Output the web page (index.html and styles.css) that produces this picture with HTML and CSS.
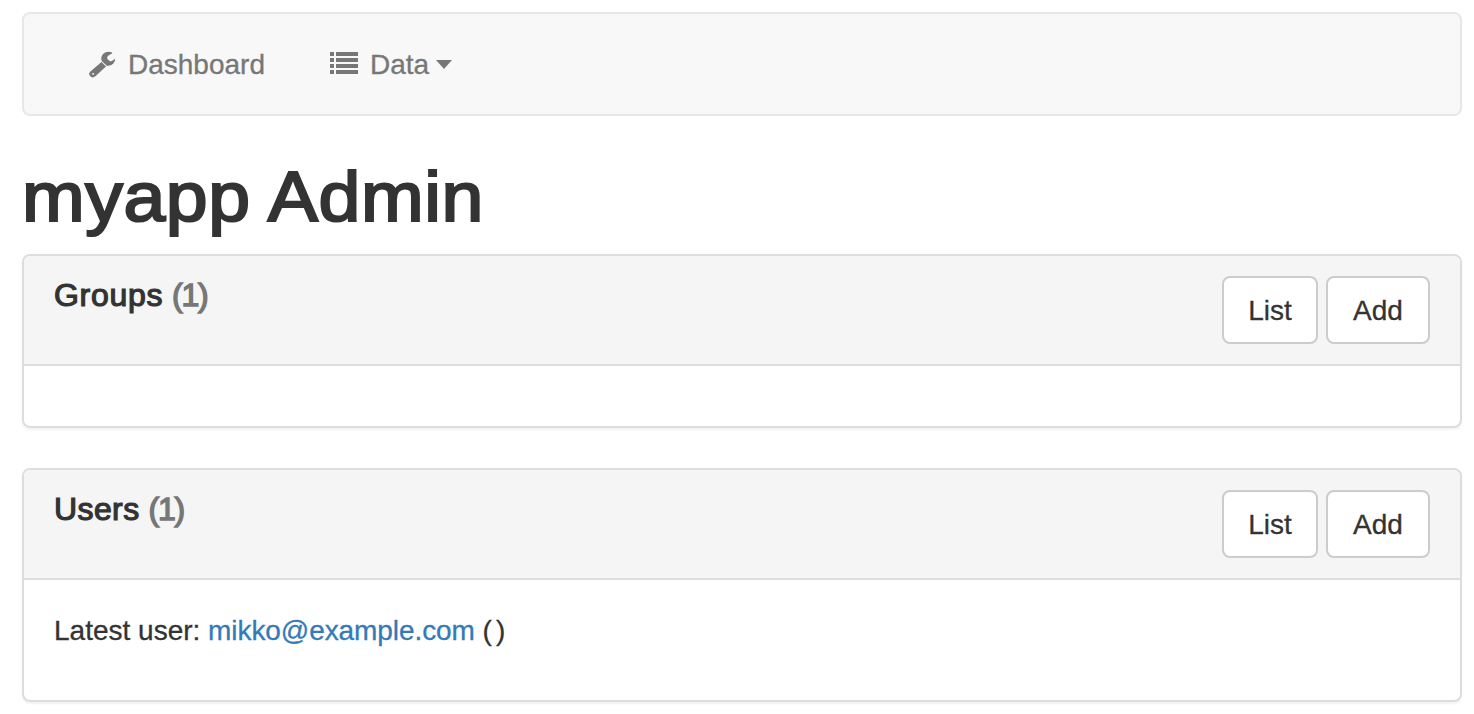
FILE: index.html
```html
<!DOCTYPE html>
<html lang="en">
<head>
<meta charset="utf-8">
<title>myapp Admin</title>
<link rel="stylesheet" href="styles.css">
</head>
<body>
<nav class="navbar">
  <a class="nav-link" href="#">
    <svg class="icon-wrench" viewBox="0 0 28 28"><path fill-rule="evenodd" d="M13.5 12.1 L18 16.4 L7.1 26.6 Q4.5 28.3 2.2 26.3 Q.2 23.8 2.1 21.7 Z M5.1 23 a.9 .9 0 1 0 .01 0 Z"/><path d="M23.6 2.2 Q18.4 .6 15 4 Q12.4 7.3 13.7 11.1 L18.7 15.7 Q22.4 16.4 25.2 13.8 Q27.3 11.7 27.2 8.8 L23.7 11 Q22.7 11.5 21.7 11 L19.8 9.4 Q18.9 8.5 19.3 7.4 Q19.5 6.3 20.5 5.6 L24.4 3.2 Z"/></svg>
    <span class="dashboard-label">Dashboard</span>
  </a>
  <a class="nav-link" href="#">
    <svg class="icon-list" viewBox="0 0 28 22"><path d="M0 0h4v4H0zM6 0h22v4H6zM0 6h4v4H0zM6 6h22v4H6zM0 12h4v4H0zM6 12h22v4H6zM0 18h4v4H0zM6 18h22v4H6z"/></svg>
    <span class="data-label">Data</span>
    <span class="caret"></span>
  </a>
</nav>
<main>
  <h1 class="title">myapp Admin</h1>
  <section class="panel">
    <header class="panel-heading">
      <h3 class="panel-title"><span class="groups-label">Groups</span> <small class="count">(1)</small></h3>
      <div class="actions"><a class="btn btn-list" href="#">List</a><a class="btn btn-add" href="#">Add</a></div>
    </header>
    <div class="panel-body"></div>
  </section>
  <section class="panel">
    <header class="panel-heading">
      <h3 class="panel-title"><span class="users-label">Users</span> <small class="count">(1)</small></h3>
      <div class="actions"><a class="btn btn-list" href="#">List</a><a class="btn btn-add" href="#">Add</a></div>
    </header>
    <div class="panel-body"><p class="latest"><span class="latest-label">Latest user:</span> <a class="user-link" href="#">mikko@example.com</a> <span class="parens">( )</span></p></div>
  </section>
</main>
</body>
</html>
```
FILE: styles.css
```css
* { box-sizing: border-box; }
body {
  margin: 0;
  padding: 12px 12px 0 22px;
  background: #fff;
  color: #333;
  font: 28px/40px "Liberation Sans", Arial, sans-serif;
  -webkit-text-stroke: .3px;
}
a { text-decoration: none; }
.navbar {
  display: flex;
  height: 104px;
  padding: 0 64px;
  border: 2px solid #e7e7e7;
  border-radius: 8px;
  background: #f8f8f8;
}
.nav-link { display: flex; align-items: center; color: #777; }
.nav-link + .nav-link { margin-left: 65px; }
.nav-link svg { fill: currentColor; flex: none; }
.icon-wrench { width: 28px; height: 28px; }
.dashboard-label { margin-left: 12px; padding-top: 1px; }
.icon-list { width: 28px; height: 22px; margin-top: -2px; }
.data-label { margin-left: 12px; padding-top: 1px; }
.caret {
  margin-left: 7px;
  border-top: 9px solid;
  border-left: 8.5px solid transparent;
  border-right: 8.5px solid transparent;
}
.title {
  width: max-content;
  margin: 41px 0 17px;
  font-size: 71px;
  line-height: 80px;
  font-weight: 400;
  letter-spacing: .5px;
  -webkit-text-stroke: 2.2px #333;
  transform: scaleX(1.06);
  transform-origin: left;
}
.panel {
  margin-bottom: 40px;
  border: 2px solid #ddd;
  border-radius: 8px;
  box-shadow: 0 2px 2px rgba(0, 0, 0, .05);
  overflow: hidden;
}
.panel-heading {
  display: flex;
  justify-content: space-between;
  height: 110px;
  padding: 20px 30px;
  border-bottom: 2px solid #ddd;
  background: #f5f5f5;
}
.panel-title {
  margin: 0;
  font-size: 32px;
  line-height: 38px;
  font-weight: 400;
  -webkit-text-stroke: 1.2px;
}
.groups-label { letter-spacing: .7px; }
.users-label { letter-spacing: .4px; }
.count { font-size: 32px; letter-spacing: -1.2px; color: #777; -webkit-text-stroke: 1.4px; }
.actions { display: flex; gap: 8px; }
.btn {
  height: 68px;
  border: 2px solid #ccc;
  border-radius: 8px;
  background: #fff;
  color: #333;
  line-height: 66px;
  text-align: center;
}
.btn-list { width: 96px; }
.btn-add { width: 104px; }
.panel-body { min-height: 60px; padding: 31px 30px 29px; }
.latest { margin: 0 0 20px; }
.user-link { color: #337ab7; letter-spacing: -.08px; }
.parens { letter-spacing: -1.8px; }
```
